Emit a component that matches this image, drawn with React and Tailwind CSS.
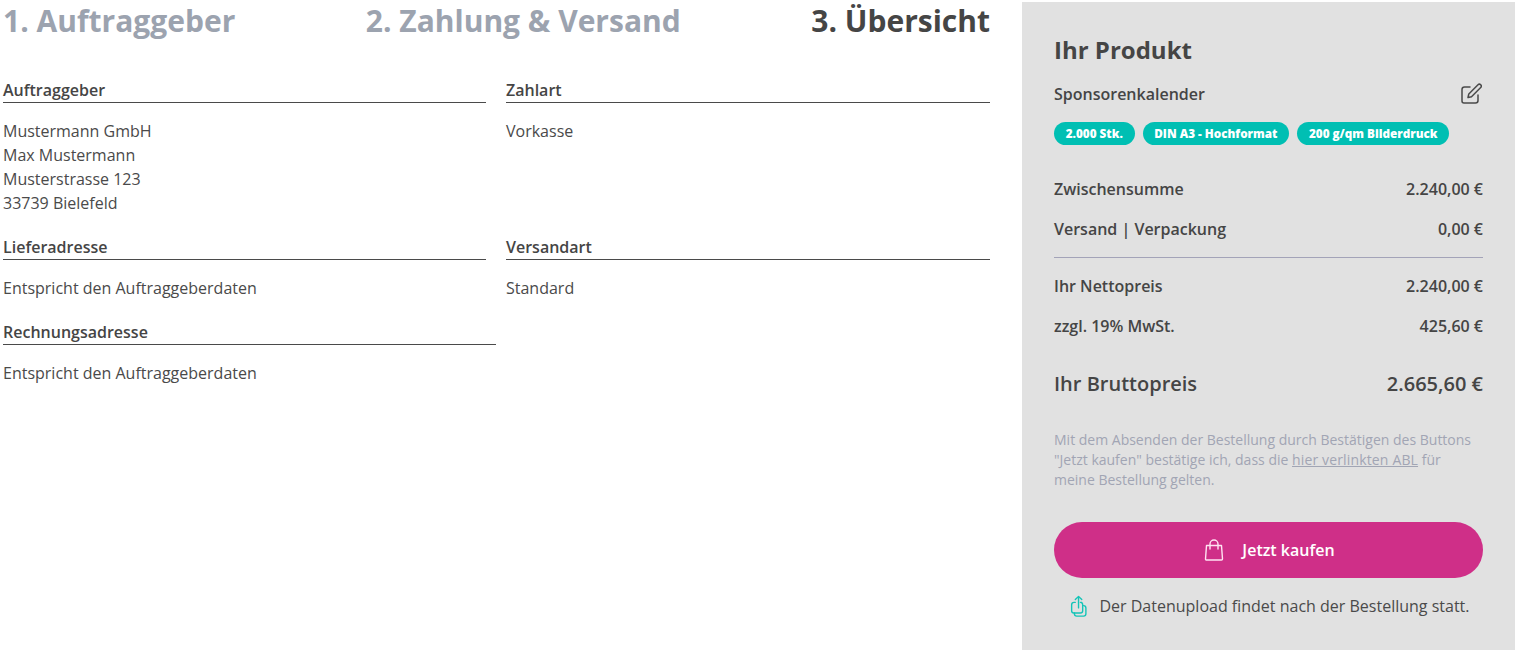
const font = { fontFamily: '"Open Sans", sans-serif' };

function Section({ title, children, className = "" }) {
  return (
    <div className={className}>
      <div className="border-b border-[#4a4a4a] h-[24px] text-[16px] leading-[22px] font-semibold text-[#454545]">{title}</div>
      <div className="mt-[16px] text-[16px] leading-[24px] text-[#4a4a4a]">{children}</div>
    </div>
  );
}

function Row({ label, value, className = "" }) {
  return (
    <div className={`flex justify-between font-semibold text-[#454545] ${className}`}>
      <span>{label}</span>
      <span>{value}</span>
    </div>
  );
}

function Pill({ children }) {
  return (
    <span className="h-[23px] rounded-full bg-[#00bfb3] px-[11.750px] text-[11.700px] leading-[23px] font-extrabold text-white">{children}</span>
  );
}

export default function App() {
  return (
    <div style={font} className="flex h-[653px] w-[1518px] bg-white pl-[3px] pt-[2px] pb-[3px] pr-[3px] overflow-hidden">
      <div className="w-[987px]">
        <div className="flex justify-between text-[30px] leading-[38px] font-bold text-[#9ca3af]">
          <span>1. Auftraggeber</span>
          <span>2. Zahlung &amp; Versand</span>
          <span className="text-[#454545]">3. Übersicht</span>
        </div>
        <div className="mt-[39px] grid grid-cols-[483px_484px] gap-x-[20px]">
          <Section title="Auftraggeber">
            Mustermann GmbH<br />Max Mustermann<br />Musterstrasse 123<br />33739 Bielefeld
          </Section>
          <Section title="Zahlart">Vorkasse</Section>
          <Section title="Lieferadresse" className="mt-[21px]">Entspricht den Auftraggeberdaten</Section>
          <Section title="Versandart" className="mt-[21px]">Standard</Section>
          <Section title="Rechnungsadresse" className="mt-[21px] w-[493px]">Entspricht den Auftraggeberdaten</Section>
        </div>
      </div>
      <div className="ml-[32px] w-[493px] bg-[#e1e1e1] px-[32px] pt-[31px]">
        <h2 className="text-[24px] leading-[33px] font-bold text-[#454545]">Ihr Produkt</h2>
        <div className="mt-[17px] flex items-center justify-between text-[16px] leading-[22px] font-semibold text-[#454545]">
          <span>Sponsorenkalender</span>
          <svg width="22" height="22" viewBox="0 0 22 22" fill="none" stroke="#4a4a4a" strokeWidth="1.5" strokeLinecap="round" strokeLinejoin="round" className="mr-[1px]">
            <path d="M10 4H4.500A2.500 2.500 0 0 0 2 6.500V18a2 2 0 0 0 2 2h11.500A2.500 2.500 0 0 0 18 17.500V12" />
            <path d="M18 1.800a1.900 1.900 0 0 1 2.700 2.700L11.500 13.700 8 14.500l.8-3.500z" />
          </svg>
        </div>
        <div className="mt-[17px] flex gap-[8px]">
          <Pill>2.000 Stk.</Pill>
          <Pill>DIN A3 - Hochformat</Pill>
          <Pill>200 g/qm Bilderdruck</Pill>
        </div>
        <Row label="Zwischensumme" value="2.240,00 €" className="mt-[24px] text-[16px] leading-[40px]" />
        <Row label="Versand | Verpackung" value="0,00 €" className="text-[16px] leading-[40px]" />
        <div className="mt-[8px] h-px bg-[#a3a3b8]" />
        <Row label="Ihr Nettopreis" value="2.240,00 €" className="mt-[8px] text-[16px] leading-[40px]" />
        <Row label="zzgl. 19% MwSt." value="425,60 €" className="text-[16px] leading-[40px]" />
        <Row label="Ihr Bruttopreis" value="2.665,60 €" className="mt-[18px] text-[20px] leading-[40px]" />
        <p className="mt-[26px] text-[14px] leading-[20px] text-[#a1a5b4]">
          Mit dem Absenden der Bestellung durch Bestätigen des Buttons<br />"Jetzt kaufen" bestätige ich, dass die <span className="font-medium tracking-[0.15px] underline">hier verlinkten ABL</span> für<br />meine Bestellung gelten.
        </p>
        <button className="mt-[32px] flex h-[56px] w-full items-center justify-center gap-[18px] rounded-full bg-[#cf2f88] pl-[2px] text-[16px] font-semibold text-white">
          <svg width="20" height="22" viewBox="0 0 20 22" fill="none" stroke="#ffe3f2" strokeWidth="1.4" strokeLinejoin="round" strokeLinecap="round">
            <path d="M2.500 6.500h15l1 13.500a1 1 0 0 1-1 1h-15a1 1 0 0 1-1-1z" />
            <path d="M6 10V5a4 4 0 0 1 8 0v5" />
          </svg>
          Jetzt kaufen
        </button>
        <div className="mt-[15px] flex items-center justify-center gap-[11px] pl-[3px] text-[16px] leading-[26px] text-[#4a4a4a]">
          <svg width="18" height="23" viewBox="0 0 19 25" fill="none" stroke="#14c4b7" strokeWidth="1.500" strokeLinecap="round" strokeLinejoin="round">
            <path d="M9 14V2M5.500 5 9 1.500 12.500 5" />
            <path d="M5.500 8H4a2.500 2.500 0 0 0-2.500 2.500V17A2.500 2.500 0 0 0 4 19.500h7a2.500 2.500 0 0 0 2.500-2.500v-6.500A2.500 2.500 0 0 0 11 8H12.500" />
            <path d="M4.500 19.500v1a2.500 2.500 0 0 0 2.500 2.500h7.500a2.500 2.500 0 0 0 2.500-2.500V14a2.500 2.500 0 0 0-2.500-2.500" />
          </svg>
          <span>Der Datenupload findet nach der Bestellung statt.</span>
        </div>
      </div>
    </div>
  );
}
